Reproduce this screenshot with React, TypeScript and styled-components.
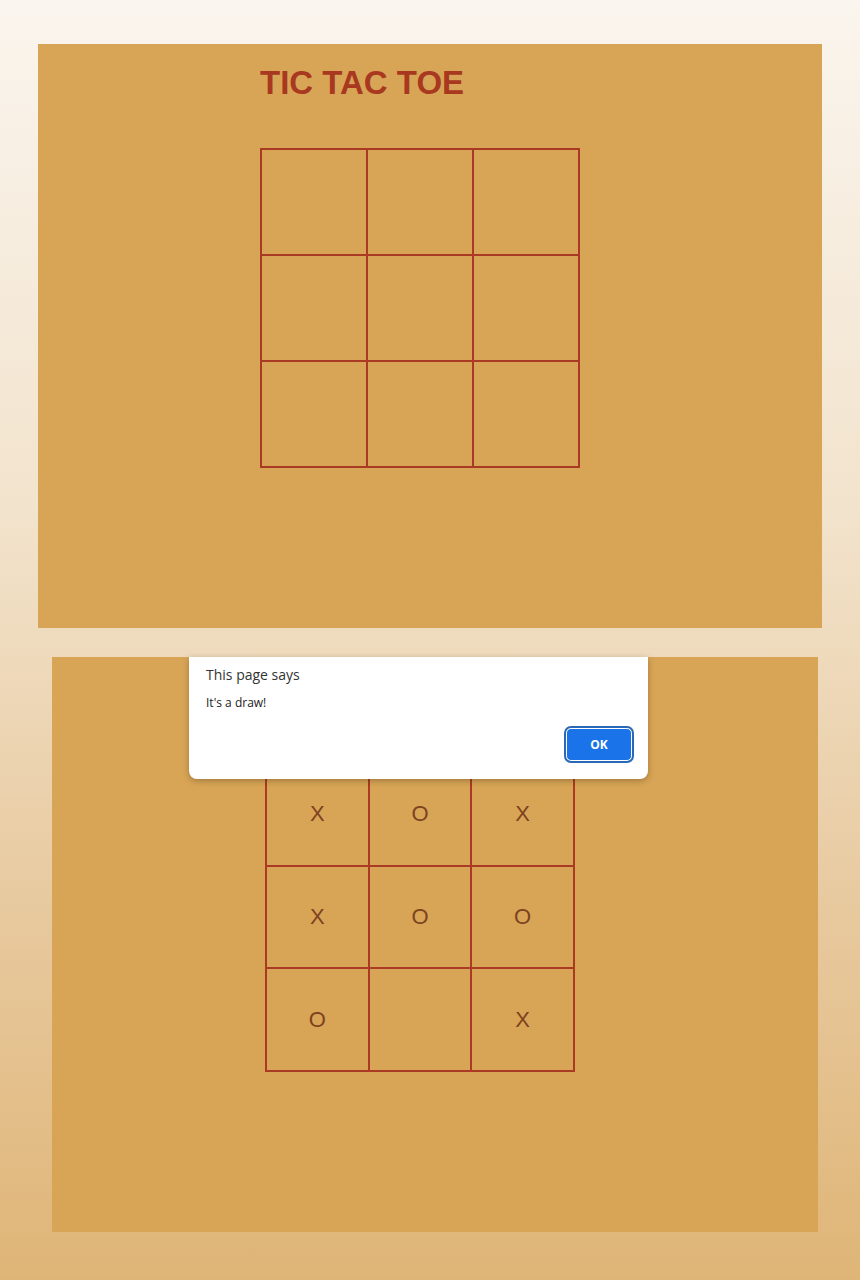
import React from "react";
import styled, { createGlobalStyle } from "styled-components";

const Global = createGlobalStyle`
  html, body { margin: 0; padding: 0; }
  body {
    font-family: "Liberation Sans", Arial, sans-serif;
    background: linear-gradient(180deg, #faf5ee 0%, #f2e3cc 40%, #e8caa0 70%, #dfb577 100%);
    min-height: 1280px;
  }
`;

const Page = styled.div`
  height: 1280px;
  box-sizing: border-box;
  padding-top: 44px;
  display: flex;
  flex-direction: column;
  gap: 29px;
`;

const Panel = styled.section<{ $left: number; $width: number; $height: number; $padLeft: number; $padTop: number }>`
  position: relative;
  margin-left: ${(p) => p.$left}px;
  width: ${(p) => p.$width}px;
  height: ${(p) => p.$height}px;
  box-sizing: border-box;
  padding: ${(p) => p.$padTop}px 0 0 ${(p) => p.$padLeft}px;
  background: #d8a556;
`;

const Title = styled.h1`
  margin: 0 0 47px 0;
  font-family: "Liberation Sans", Arial, sans-serif;
  font-size: 33px;
  line-height: 36px;
  font-weight: 700;
  color: #a8381f;
`;

const Board = styled.div<{ $cell: number }>`
  display: grid;
  grid-template-columns: repeat(3, ${(p) => p.$cell}px);
  grid-template-rows: repeat(3, ${(p) => p.$cell}px);
  width: max-content;
  border-left: 2px solid #ab3a24;
  border-top: 2px solid #ab3a24;
`;

const Cell = styled.div`
  border-right: 2px solid #ab3a24;
  border-bottom: 2px solid #ab3a24;
  display: flex;
  align-items: center;
  justify-content: center;
  font-family: "Liberation Sans", Arial, sans-serif;
  font-size: 22px;
  color: #7d4220;
`;

const Dialog = styled.div`
  position: absolute;
  left: 137px;
  top: 0;
  width: 459px;
  height: 122px;
  box-sizing: border-box;
  background: #ffffff;
  border-radius: 0 0 8px 8px;
  box-shadow: 0 2px 6px rgba(60, 40, 20, 0.35);
  padding: 8px 16px 0 17px;
  display: flex;
  flex-direction: column;
  font-family: "Open Sans", "Noto Sans", sans-serif;
  color: #2b2b2b;
`;

const DialogTitle = styled.div`
  font-size: 14px;
  line-height: 20px;
  color: #333;
`;

const DialogMessage = styled.div`
  margin-top: 10px;
  font-size: 12px;
  line-height: 16px;
  color: #222;
`;

const DialogActions = styled.div`
  margin-top: 17px;
  display: flex;
  justify-content: flex-end;
`;

const OkButton = styled.button`
  width: 66px;
  height: 33px;
  box-sizing: border-box;
  border: 1px solid #ffffff;
  outline: 2px solid #2a68b8;
  outline-offset: 0;
  border-radius: 5px;
  background: #1a73e8;
  color: #fff;
  font-family: "Open Sans", "Noto Sans", sans-serif;
  font-weight: 700;
  font-size: 12px;
  cursor: pointer;
`;

const empty = ["", "", "", "", "", "", "", "", ""];
const played = ["X", "O", "X", "X", "O", "O", "O", "", "X"];

export default function App() {
  return (
    <>
      <Global />
      <Page>
        <Panel $left={38} $width={784} $height={584} $padLeft={222} $padTop={21}>
          <Title>TIC TAC TOE</Title>
          <Board $cell={106}>
            {empty.map((v, i) => (
              <Cell key={i}>{v}</Cell>
            ))}
          </Board>
        </Panel>
        <Panel $left={52} $width={766} $height={575} $padLeft={213} $padTop={105}>
          <Board $cell={102.67}>
            {played.map((v, i) => (
              <Cell key={i}>{v}</Cell>
            ))}
          </Board>
          <Dialog role="alertdialog">
            <DialogTitle>This page says</DialogTitle>
            <DialogMessage>It's a draw!</DialogMessage>
            <DialogActions>
              <OkButton>OK</OkButton>
            </DialogActions>
          </Dialog>
        </Panel>
      </Page>
    </>
  );
}
